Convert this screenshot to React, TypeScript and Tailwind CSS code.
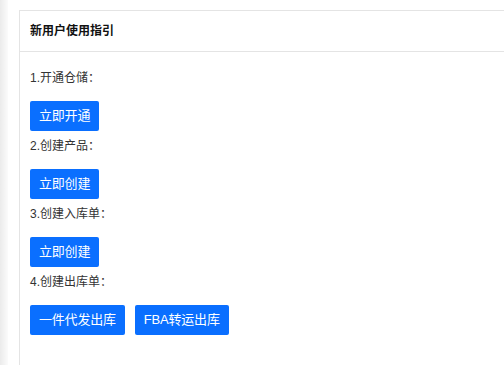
const STEPS = [
  { label: "1.开通仓储：", buttons: ["立即开通"] },
  { label: "2.创建产品：", buttons: ["立即创建"] },
  { label: "3.创建入库单：", buttons: ["立即创建"] },
  { label: "4.创建出库单：", buttons: ["一件代发出库", "FBA转运出库"] },
];

export default function App() {
  return (
    <div className="flex h-[365px] w-[504px] overflow-hidden bg-white font-['Liberation_Sans','Noto_Sans_CJK_SC',sans-serif]">
      <div className="w-[8px] shrink-0 bg-gradient-to-r from-[#ebebeb] to-[#fbfbfb]" />
      <div className="flex-1 pl-[11px] pt-[10px]">
        <div className="h-full border-l border-t border-[#e4e4e4]">
          <div className="flex h-[41px] items-center border-b border-[#e4e4e4] px-[10px] text-[12px] font-bold text-[#111]">
            新用户使用指引
          </div>
          <div className="px-[10px] pt-[11px]">
            {STEPS.map((s) => (
              <div key={s.label}>
                <div className="mt-[5px] mb-[13px] h-[20px] text-[12px] leading-[20px] text-[#333]">
                  {s.label}
                </div>
                <div className="flex gap-[10px]">
                  {s.buttons.map((b) => (
                    <button
                      key={b}
                      className="h-[30px] rounded-[2px] bg-[#0a6fff] px-[9px] text-[13px] tracking-[-0.2px] text-white"
                    >
                      {b}
                    </button>
                  ))}
                </div>
              </div>
            ))}
          </div>
        </div>
      </div>
    </div>
  );
}
